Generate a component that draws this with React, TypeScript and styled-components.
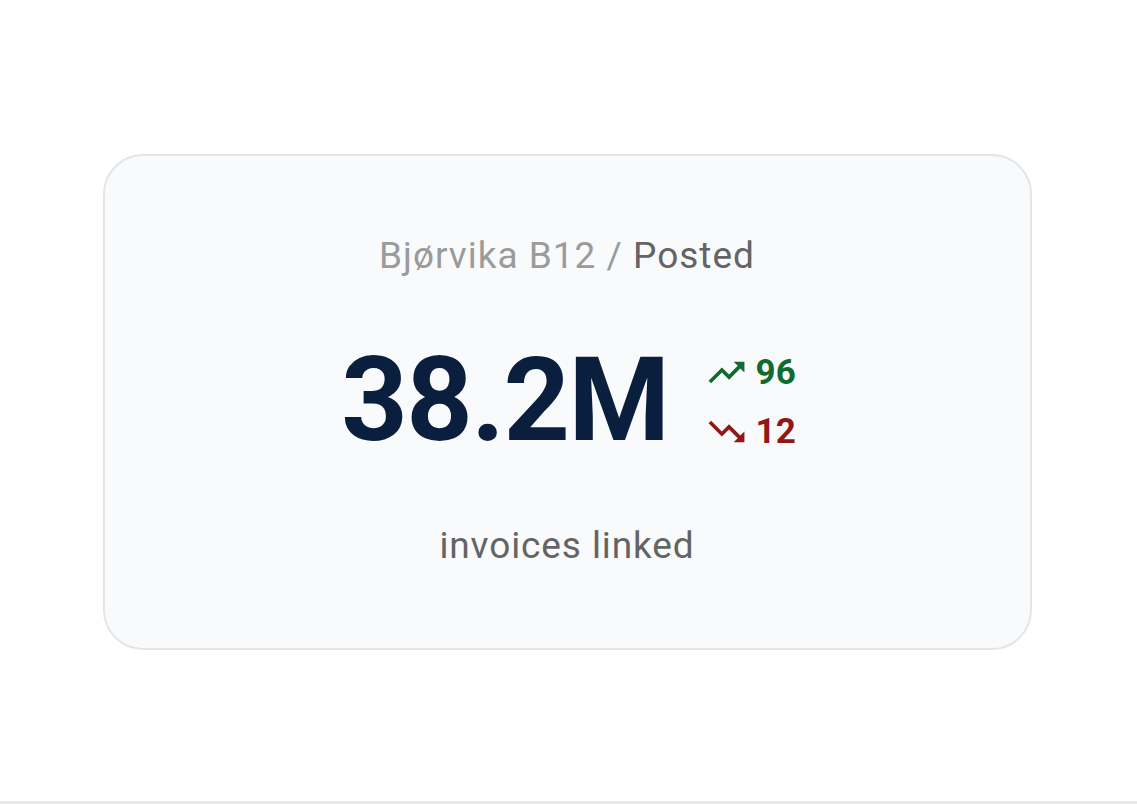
import React from "react";
import styled, { createGlobalStyle } from "styled-components";
import { MdTrendingUp, MdTrendingDown } from "react-icons/md";

const GlobalStyle = createGlobalStyle`
  html, body {
    margin: 0;
    padding: 0;
    background: #ffffff;
    font-family: Roboto, "Liberation Sans", sans-serif;
  }
`;

const Page = styled.div`
  height: 801px;
  border-bottom: 3px solid #e9e9e9;
  display: flex;
  align-items: center;
  justify-content: center;
`;

const Card = styled.div`
  box-sizing: border-box;
  width: 929px;
  height: 496px;
  margin: 2px 3px 0 0;
  border: 2px solid #e3e5e9;
  border-radius: 40px;
  background: #f9fafc;
  display: flex;
  flex-direction: column;
  align-items: center;
  padding-top: 78px;
`;

const Title = styled.div`
  font-size: 37px;
  line-height: 43px;
  letter-spacing: 1px;
  color: #9b9b9b;
`;

const Current = styled.span`
  color: #646464;
`;

const MainRow = styled.div`
  display: flex;
  align-items: center;
  gap: 36px;
  margin-top: 65px;
  margin-left: 3px;
`;

const Value = styled.div`
  font-size: 116px;
  line-height: 116px;
  font-weight: 700;
  color: #0a1f3e;
  letter-spacing: -1.5px;
`;

const Stats = styled.div`
  display: flex;
  flex-direction: column;
  gap: 16px;
  margin-top: 4px;
`;

const Stat = styled.div<{ $tone: "up" | "down" }>`
  display: flex;
  align-items: center;
  gap: 8px;
  height: 43px;
  font-size: 35px;
  font-weight: 700;
  color: ${({ $tone }) => ($tone === "up" ? "#0f6b2e" : "#921818")};
`;

const Caption = styled.div`
  margin-top: 66px;
  font-size: 37px;
  line-height: 43px;
  letter-spacing: 0.9px;
  color: #646464;
`;

export default function App() {
  return (
    <>
      <GlobalStyle />
      <Page>
        <Card>
          <Title>
            Bjørvika B12 / <Current>Posted</Current>
          </Title>
          <MainRow>
            <Value>38.2M</Value>
            <Stats>
              <Stat $tone="up">
                <MdTrendingUp size={43} />
                96
              </Stat>
              <Stat $tone="down">
                <MdTrendingDown size={43} />
                12
              </Stat>
            </Stats>
          </MainRow>
          <Caption>invoices linked</Caption>
        </Card>
      </Page>
    </>
  );
}
